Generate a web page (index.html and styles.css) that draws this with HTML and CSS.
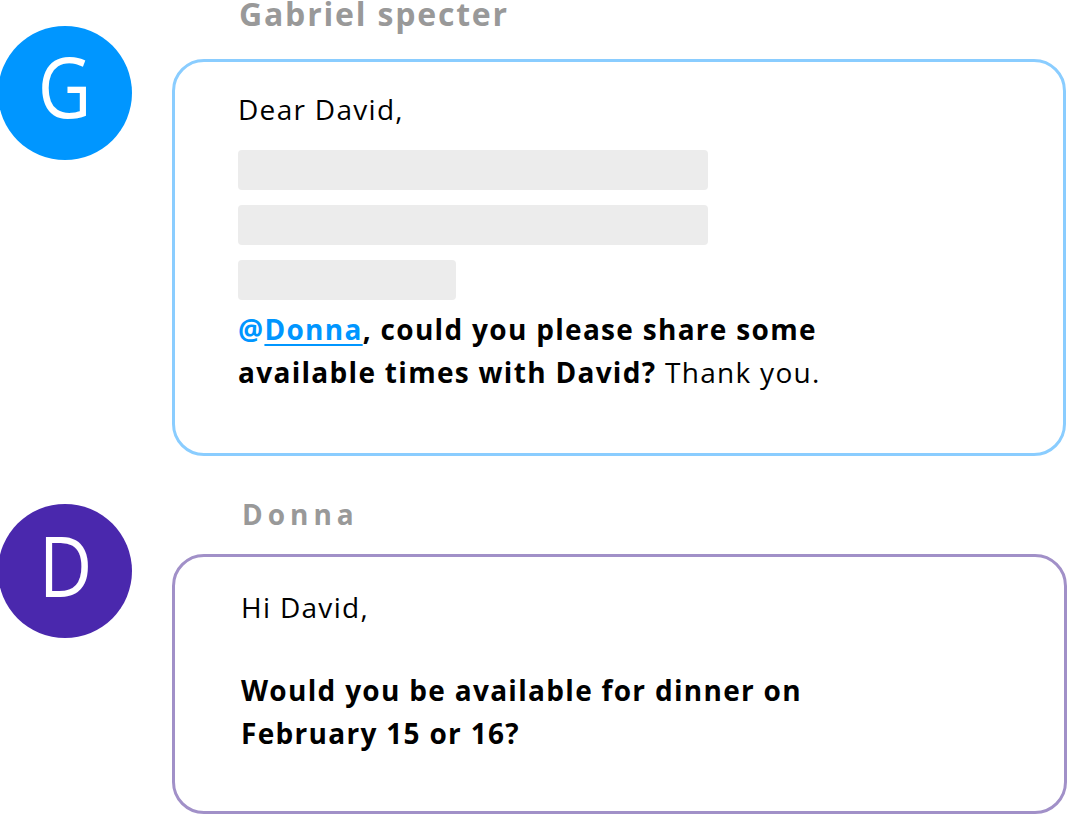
FILE: index.html
```html
<!DOCTYPE html>
<html lang="en">
<head>
<meta charset="utf-8">
<title>Thread</title>
<link rel="stylesheet" href="styles.css">
</head>
<body>
<div class="thread">
  <div class="msg msg-g">
    <div class="avatar avatar-g"><span class="initial">G</span></div>
    <div class="content">
      <div class="name name-g">Gabriel specter</div>
      <div class="bubble bubble-g">
        <p class="line greet">Dear David,</p>
        <div class="bars">
          <div class="bar bar-long"></div>
          <div class="bar bar-long"></div>
          <div class="bar bar-short"></div>
        </div>
        <p class="para"><strong><span class="mention">@<u>Donna</u></span>, could you please share some available times with David?</strong> Thank you.</p>
      </div>
    </div>
  </div>
  <div class="msg msg-d">
    <div class="avatar avatar-d"><span class="initial">D</span></div>
    <div class="content">
      <div class="name name-d">Donna</div>
      <div class="bubble bubble-d">
        <p class="line greet">Hi David,</p>
        <p class="para para-d"><strong>Would you be available for dinner on February 15 or 16?</strong></p>
      </div>
    </div>
  </div>
</div>
</body>
</html>
```
FILE: styles.css
```css
html, body {
  margin: 0;
  padding: 0;
  background: #ffffff;
}
body {
  font-family: "Open Sans", "Noto Sans", sans-serif;
  color: #000;
  width: 1080px;
  height: 817px;
  overflow: hidden;
}
.thread {
  display: flex;
  flex-direction: column;
}
.msg {
  display: flex;
  align-items: flex-start;
}
.msg-d {
  margin-top: 44px;
}
.avatar {
  flex: none;
  width: 134px;
  height: 134px;
  margin-left: -2px;
  border-radius: 50%;
  color: #fff;
  font-size: 84px;
  line-height: 1;
  display: flex;
  align-items: center;
  justify-content: center;
  box-sizing: border-box;
  padding-bottom: 14px;
}
.initial {
  display: block;
  transform: scaleX(0.88);
}
.avatar-g {
  background: #0096ff;
  margin-top: 26px;
}
.avatar-d {
  background: #4a28ad;
  margin-top: 4px;
  padding-bottom: 12px;
}
.content {
  display: flex;
  flex-direction: column;
  margin-left: 40px;
}
.name {
  font-weight: 700;
  color: #999999;
  line-height: 28px;
}
.name-g {
  font-size: 32px;
  letter-spacing: 1.8px;
  padding-left: 67px;
  margin-bottom: 31px;
}
.name-d {
  font-size: 28px;
  letter-spacing: 5px;
  padding-left: 70px;
  margin-bottom: 26px;
}
.bubble {
  border-radius: 32px;
  box-sizing: border-box;
}
.bubble-g {
  border: 3px solid #8acdff;
  width: 894px;
  height: 397px;
  padding: 26px 0 0 63px;
}
.bubble-d {
  border: 3px solid #a190c8;
  width: 895px;
  height: 260px;
  padding: 29px 0 0 66px;
}
.line {
  margin: 0;
  font-size: 28px;
  line-height: 43px;
  letter-spacing: 1.3px;
}
.bars {
  display: flex;
  flex-direction: column;
  gap: 15px;
  margin-top: 19px;
}
.bar {
  height: 40px;
  border-radius: 4px;
  background: #ececec;
}
.bar-long {
  width: 470px;
}
.bar-short {
  width: 218px;
}
.para {
  margin: 8px 0 0;
  font-size: 28px;
  line-height: 43px;
  letter-spacing: 1.3px;
  width: 620px;
}
.para-d {
  margin-top: 40px;
}
.mention {
  color: #0096ff;
}
.mention u {
  text-decoration-thickness: 2px;
  text-underline-offset: 4px;
}
```
